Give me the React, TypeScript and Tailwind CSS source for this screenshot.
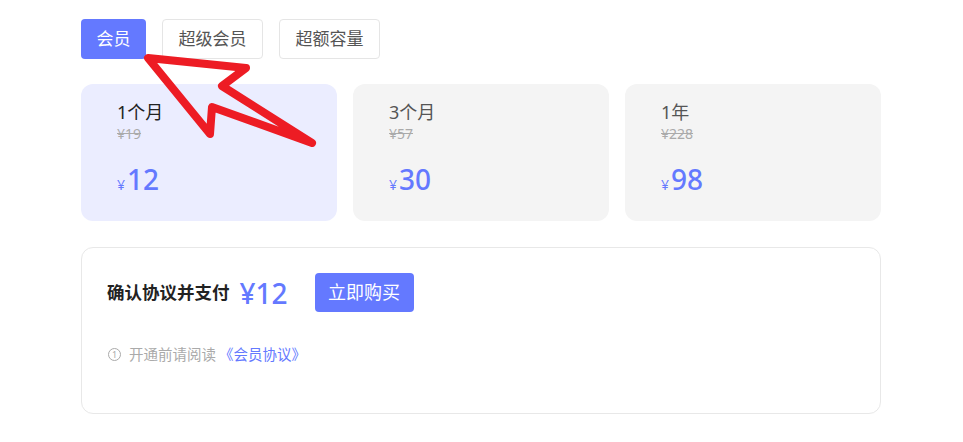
import React from "react";

const plans = [
  { name: "1个月", orig: "¥19", price: "12", active: true },
  { name: "3个月", orig: "¥57", price: "30", active: false },
  { name: "1年", orig: "¥228", price: "98", active: false },
];

export default function App() {
  return (
    <div
      className="relative w-[963px] h-[442px] bg-white overflow-hidden"
      style={{ fontFamily: '"Noto Sans", "Noto Sans CJK SC", sans-serif' }}
    >
      <div className="pl-[81px] pt-[19px] w-[881px]">
        <div className="flex gap-4">
          <button className="w-[65px] h-[40px] rounded-[4px] bg-[#6479ff] text-white text-[17px] flex items-center justify-center">
            会员
          </button>
          <button className="w-[101px] h-[40px] rounded-[4px] border border-[#e5e5e5] bg-white text-[#555] text-[17px] flex items-center justify-center">
            超级会员
          </button>
          <button className="w-[101px] h-[40px] rounded-[4px] border border-[#e5e5e5] bg-white text-[#555] text-[17px] flex items-center justify-center">
            超额容量
          </button>
        </div>

        <div className="mt-[25px] grid grid-cols-3 gap-4">
          {plans.map((p) => (
            <div
              key={p.name}
              className={`h-[137px] rounded-[12px] pl-[36px] pt-[15px] ${
                p.active ? "bg-[#ebedff]" : "bg-[#f4f4f4]"
              }`}
            >
              <div
                className={`text-[18px] leading-[26px] ${
                  p.active ? "text-[#222]" : "text-[#555]"
                }`}
              >
                {p.name}
              </div>
              <div className="text-[14px] leading-[18px] text-[#aaa] line-through">
                {p.orig}
              </div>
              <div className="mt-[18px] flex items-baseline text-[#6479ff]">
                <span className="text-[14px] mr-[2px]">¥</span>
                <span className="text-[28px] leading-[36px] font-medium">{p.price}</span>
              </div>
            </div>
          ))}
        </div>

        <div className="mt-[26px] h-[167px] rounded-[12px] border border-[#e8e8e8] pl-[25px] pt-[25px]">
          <div className="flex items-center h-[39px]">
            <span className="text-[17.5px] font-bold text-[#222]">确认协议并支付</span>
            <span className="ml-[10px] text-[28px] font-medium text-[#6479ff]">¥12</span>
            <button className="ml-[27px] w-[99px] h-[39px] rounded-[4px] bg-[#6479ff] text-white text-[18px] flex items-center justify-center">
              立即购买
            </button>
          </div>
          <div className="mt-[32px] flex items-center text-[14.5px] text-[#aaa]">
            <span className="ml-[1px] w-[13px] h-[13px] rounded-full border border-[#aaa] text-[9px] leading-none flex items-center justify-center mr-[8px]">
              1
            </span>
            <span>开通前请阅读</span>
            <span className="ml-[3px] text-[#6479ff]">《会员协议》</span>
          </div>
        </div>
      </div>

      <svg
        className="absolute left-0 top-0 pointer-events-none"
        width="963"
        height="442"
      >
        <path
          d="M148 58 L246 68 L222 86 L312 143 L212 107 L210 134 Z"
          fill="none"
          stroke="#ed1c24"
          strokeWidth="8"
          strokeLinejoin="round"
          strokeLinecap="round"
        />
      </svg>
    </div>
  );
}
